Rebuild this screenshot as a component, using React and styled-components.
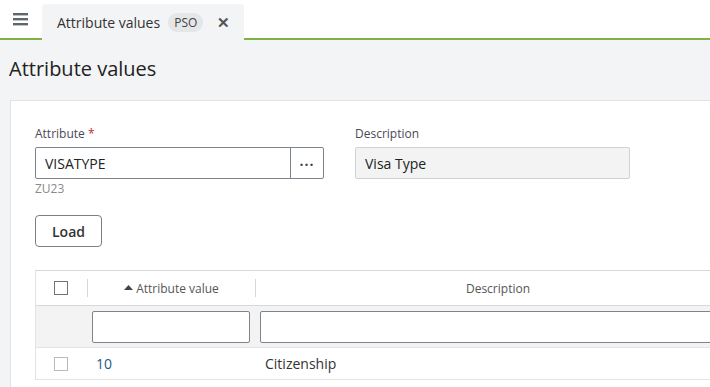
import React from "react";
import styled, { createGlobalStyle } from "styled-components";

const GlobalStyle = createGlobalStyle`
  html, body {
    margin: 0;
    padding: 0;
    background: #f3f4f6;
    font-family: "Open Sans", "Liberation Sans", sans-serif;
    color: #222;
    overflow: hidden;
  }
`;

const Page = styled.div`
  width: 710px;
  height: 387px;
  overflow: hidden;
`;

const TopBar = styled.div`
  display: flex;
  align-items: flex-end;
  height: 40px;
  background: #fff;
  border-bottom: 2px solid #7cb342;
  box-sizing: border-box;
`;

const MenuButton = styled.div`
  width: 42px;
  height: 38px;
  display: flex;
  align-items: center;
  justify-content: center;
  align-self: flex-start;
`;

const Tab = styled.div`
  display: flex;
  align-items: center;
  width: 202px;
  height: 36px;
  margin-bottom: -2px;
  background: #f3f4f6;
  border-radius: 4px 4px 0 0;
  padding: 0 15px;
  box-sizing: border-box;
  font-size: 14px;
  color: #333;
  white-space: nowrap;
`;

const Badge = styled.span`
  margin-left: 8px;
  background: #e4e6e8;
  border-radius: 9px;
  padding: 1px 6px;
  font-size: 12px;
  color: #444;
`;

const Close = styled.span`
  margin-left: 14px;
  font-size: 15px;
  color: #555;
  font-weight: 700;
`;

const Title = styled.h1`
  margin: 0;
  padding: 15px 9px 0;
  height: 60px;
  box-sizing: border-box;
  font-size: 20px;
  font-weight: 400;
  color: #222;
`;

const Card = styled.div`
  margin-left: 10px;
  width: 760px;
  background: #fff;
  border: 1px solid #e2e3e5;
  padding: 24px 24px 0;
  box-sizing: border-box;
  height: 300px;
`;

const FieldRow = styled.div`
  display: flex;
  align-items: flex-start;
  gap: 31px;
`;

const Field = styled.div`
  display: flex;
  flex-direction: column;
`;

const Label = styled.label`
  font-size: 12px;
  color: #4a4858;
  height: 22px;
  line-height: 17px;
  span {
    color: #c62828;
  }
`;

const InputGroup = styled.div`
  display: flex;
  width: 289px;
  height: 32px;
  border: 1px solid #7c858d;
  border-radius: 2px;
  box-sizing: border-box;
`;

const TextBox = styled.div`
  flex: 1;
  display: flex;
  align-items: center;
  padding: 0 9px;
  font-size: 14px;
  color: #222;
`;

const ReadOnlyBox = styled.div`
  display: flex;
  align-items: center;
  width: 275px;
  height: 32px;
  padding: 0 9px;
  font-size: 14px;
  color: #222;
  background: #f3f3f3;
  border: 1px solid #cfd3d7;
  border-radius: 2px;
  box-sizing: border-box;
`;

const Lookup = styled.div`
  width: 33px;
  border-left: 1px solid #7c858d;
  display: flex;
  align-items: center;
  justify-content: center;
  font-weight: 700;
  font-size: 14px;
  color: #444;
  letter-spacing: 1px;
  padding-bottom: 5px;
  box-sizing: border-box;
`;

const Hint = styled.div`
  font-size: 12px;
  color: #8a8a8a;
  margin-top: 1px;
`;

const Button = styled.button`
  display: block;
  margin-top: 18px;
  width: 67px;
  height: 32px;
  background: #fff;
  border: 1px solid #7a7f85;
  border-radius: 4px;
  font-family: inherit;
  font-size: 14px;
  font-weight: 600;
  color: #333;
`;

const Table = styled.div`
  margin-top: 23px;
  border-top: 1px solid #d6d8da;
  border-left: 1px solid #e2e3e5;
`;

const Row = styled.div`
  display: grid;
  grid-template-columns: 51px 168px 485px;
  height: ${(p) => p.$h}px;
  align-items: center;
  background: ${(p) => p.$bg || "#fff"};
  border-bottom: 1px solid ${(p) => p.$line || "#e3e4e6"};
  box-sizing: border-box;
`;

const Cell = styled.div`
  display: flex;
  align-items: center;
  justify-content: ${(p) => (p.$center ? "center" : "flex-start")};
  height: ${(p) => (p.$sep ? "18px" : "100%")};
  border-left: ${(p) => (p.$sep ? "1px solid #d4d6d8" : "none")};
  padding: ${(p) => p.$pad || "0"};
  font-size: ${(p) => (p.$head ? "12px" : "14px")};
  color: ${(p) => p.$color || "#333"};
  box-sizing: border-box;
`;

const Check = styled.div`
  width: 14px;
  height: 14px;
  border: 1px solid ${(p) => (p.$light ? "#b7bbbf" : "#6f757b")};
  box-sizing: border-box;
  margin-left: 18px;
`;

const FilterInput = styled.div`
  height: 32px;
  border: 1px solid #7c858d;
  border-radius: 2px;
  background: #fff;
  box-sizing: border-box;
  margin: ${(p) => p.$m};
`;

const SortArrow = styled.svg`
  margin-right: 3px;
  margin-bottom: 1px;
`;

export default function App() {
  return (
    <Page>
      <GlobalStyle />
      <TopBar>
        <MenuButton>
          <svg width="16" height="13" viewBox="0 0 16 13">
            <rect x="0" y="0" width="15" height="2.4" fill="#5f676e" />
            <rect x="0" y="5" width="15" height="2.4" fill="#5f676e" />
            <rect x="0" y="10" width="15" height="2.4" fill="#5f676e" />
          </svg>
        </MenuButton>
        <Tab>
          Attribute values
          <Badge>PSO</Badge>
          <Close>✕</Close>
        </Tab>
      </TopBar>
      <Title>Attribute values</Title>
      <Card>
        <FieldRow>
          <Field>
            <Label>
              Attribute <span>*</span>
            </Label>
            <InputGroup>
              <TextBox>VISATYPE</TextBox>
              <Lookup>...</Lookup>
            </InputGroup>
            <Hint>ZU23</Hint>
          </Field>
          <Field>
            <Label>Description</Label>
            <ReadOnlyBox>Visa Type</ReadOnlyBox>
          </Field>
        </FieldRow>
        <Button>Load</Button>
        <Table>
          <Row $h={35} $line="#d6d8da">
            <Cell>
              <Check />
            </Cell>
            <Cell $sep $center $head $color="#555">
              <SortArrow width="9" height="5" viewBox="0 0 9 5">
                <path d="M0 5 L4.5 0 L9 5 Z" fill="#444" />
              </SortArrow>
              Attribute value
            </Cell>
            <Cell $sep $center $head $color="#555">
              Description
            </Cell>
          </Row>
          <Row $h={42} $bg="#f3f3f3">
            <Cell />
            <FilterInput $m="0 5px 0 5px" />
            <FilterInput $m="0 0 0 5px" />
          </Row>
          <Row $h={32}>
            <Cell>
              <Check $light />
            </Cell>
            <Cell $pad="0 0 0 9px" $color="#1d5b86">
              10
            </Cell>
            <Cell $pad="0 0 0 10px">Citizenship</Cell>
          </Row>
        </Table>
      </Card>
    </Page>
  );
}
